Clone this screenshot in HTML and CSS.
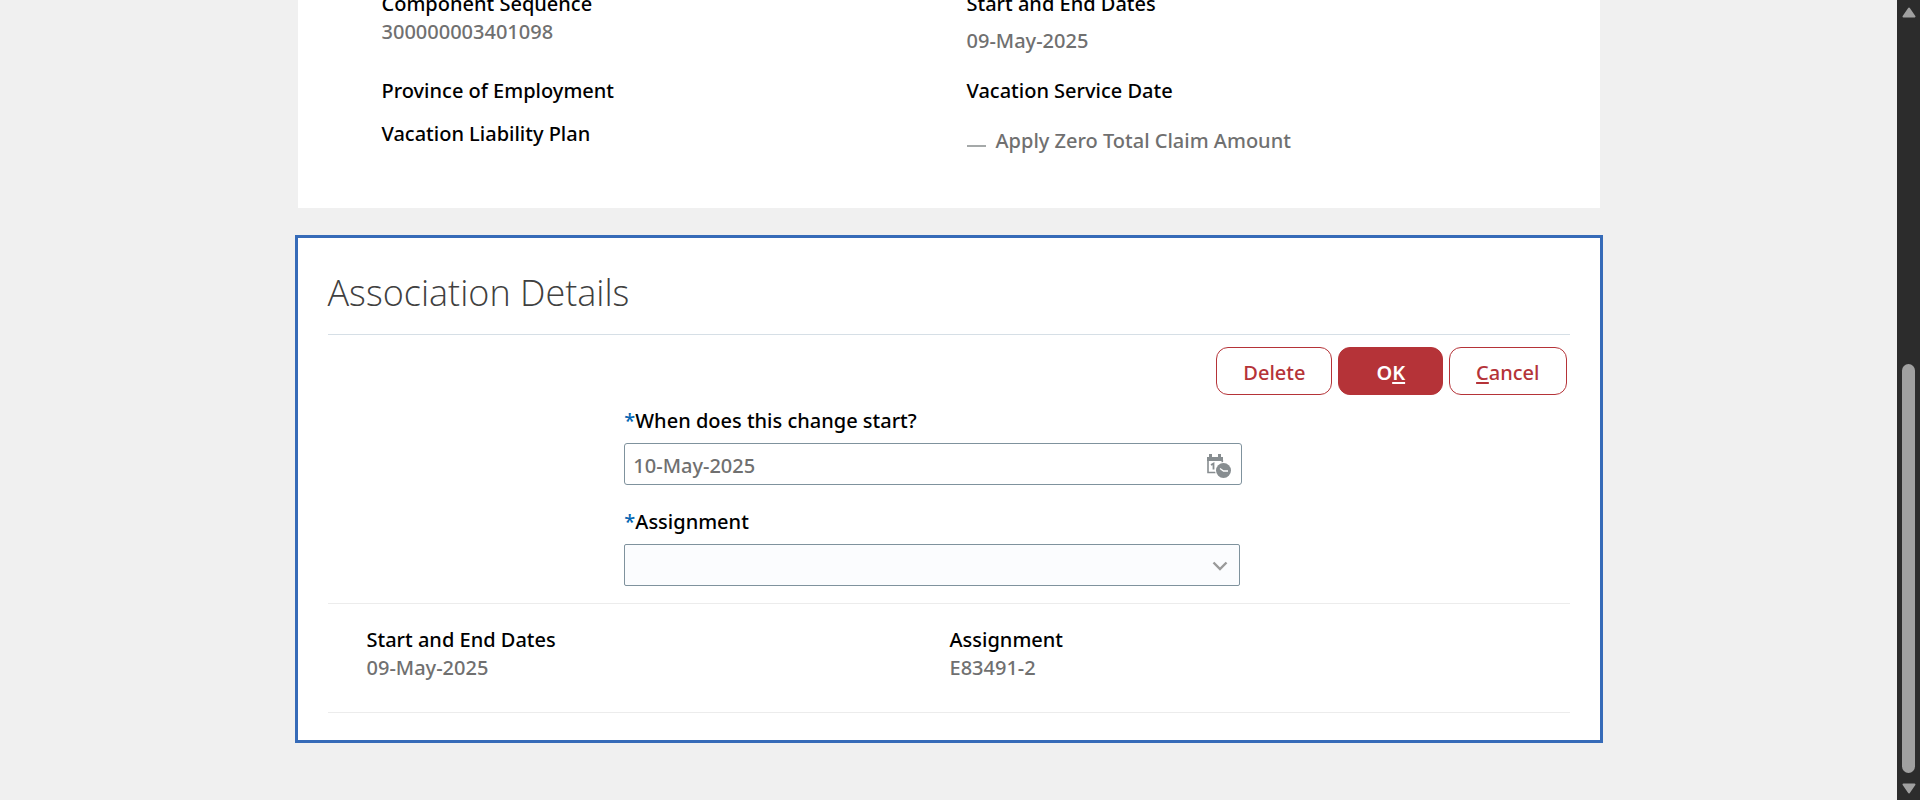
FILE: index.html
```html
<!DOCTYPE html>
<html lang="en">
<head>
<meta charset="utf-8">
<title>Association Details</title>
<link rel="stylesheet" href="styles.css">
</head>
<body>
<div class="app">
  <main class="content">
    <section class="card card-summary">
      <div class="summary-column">
        <div class="field">
          <span class="label">Component Sequence</span>
          <span class="value">300000003401098</span>
        </div>
        <span class="label label-province">Province of Employment</span>
        <span class="label label-plan">Vacation Liability Plan</span>
      </div>
      <div class="summary-column">
        <span class="label">Start and End Dates</span>
        <span class="value value-dates">09-May-2025</span>
        <span class="label label-service">Vacation Service Date</span>
        <span class="flag"><span class="dash"></span><span class="value">Apply Zero Total Claim Amount</span></span>
      </div>
    </section>

    <section class="card card-active">
      <h2 class="heading">Association Details</h2>
      <div class="actions">
        <button class="button" type="button">Delete</button>
        <button class="button button-primary" type="button" accesskey="k">O<span class="key">K</span></button>
        <button class="button" type="button" accesskey="c"><span class="key">C</span>ancel</button>
      </div>
      <form class="form">
        <div class="form-row">
          <label class="label" for="start-date"><span class="required">*</span>When does this change start?</label>
          <div class="control">
            <input class="input" id="start-date" type="text" value="10-May-2025" required>
            <svg class="icon-date" viewBox="0 0 24 24" width="24" height="24" aria-hidden="true">
              <path d="M0 3h2V0h3v3h6V0h3v3h2v4H0z" fill="#878d90"/>
              <path d="M1 6v12.500h9M15.300 6v4" fill="none" stroke="#878d90" stroke-width="1.600"/>
              <path d="M4 11l2.500-1.500v6" fill="none" stroke="#878d90" stroke-width="1.800"/>
              <circle cx="16.500" cy="16.500" r="8.500" fill="#fff"/>
              <circle cx="16.500" cy="16.500" r="7.500" fill="#878d90"/>
              <path d="M13 14.500l3.500 2.500h4.500" fill="none" stroke="#fff" stroke-width="1.300"/>
            </svg>
          </div>
        </div>
        <div class="form-row">
          <label class="label" for="assignment"><span class="required">*</span>Assignment</label>
          <div class="control control-select">
            <select class="input input-select" id="assignment" required><option value=""></option></select>
            <svg class="icon-chevron" viewBox="0 0 16 10" width="16" height="10" aria-hidden="true">
              <path d="M1.500 1.500L8 8l6.500-6.500" fill="none" stroke="#9a9a9a" stroke-width="2.400"/>
            </svg>
          </div>
        </div>
      </form>
      <div class="details">
        <div class="field">
          <span class="label">Start and End Dates</span>
          <span class="value">09-May-2025</span>
        </div>
        <div class="field">
          <span class="label">Assignment</span>
          <span class="value">E83491-2</span>
        </div>
      </div>
    </section>
  </main>

  <div class="scrollbar" aria-hidden="true">
    <svg class="arrow" viewBox="0 0 14 11" width="14" height="11"><path d="M7 1.500L12.500 9.500h-11z" fill="#a0a0a0" stroke="#a0a0a0" stroke-width="2" stroke-linejoin="round"/></svg>
    <div class="thumb"></div>
    <svg class="arrow" viewBox="0 0 14 11" width="14" height="11"><path d="M7 9.500L12.500 1.500h-11z" fill="#a0a0a0" stroke="#a0a0a0" stroke-width="2" stroke-linejoin="round"/></svg>
  </div>
</div>
</body>
</html>
```
FILE: styles.css
```css
* {
  box-sizing: border-box;
}

body {
  margin: 0;
  background: #f0f0f0;
  color: #000;
  font: 500 20px/28px "Noto Sans", "Open Sans", sans-serif;
}

.app {
  display: flex;
  height: 100vh;
  overflow: hidden;
}

.content {
  flex: 1;
  min-width: 0;
  padding: 0 24px;
}

.card {
  max-width: 1302px;
  margin: 0 auto;
  background: #fff;
}

/* The page is scrolled down, so the first card runs off the top. */
.card-summary {
  display: grid;
  grid-template-columns: 1fr 1fr;
  margin-top: -40px;
  padding: 30px 48px 53px 84px;
}

.summary-column,
.field {
  display: flex;
  flex-direction: column;
}

.label-province {
  margin-top: 31px;
}

.label-plan {
  margin-top: 15px;
}

.label-service {
  margin-top: 22px;
}

.value {
  color: #707070;
}

.value-dates {
  margin-top: 9px;
}

.flag {
  display: flex;
  align-items: center;
  gap: 10px;
  margin-top: 22px;
}

.dash {
  width: 19px;
  height: 2px;
  margin-top: 10px;
  background: #a5a9a9;
}

.card-active {
  max-width: 1308px;
  margin-top: 27px;
  padding: 27px 30px;
  border: 3px solid #366bb8;
}

.heading {
  margin: 0;
  padding-bottom: 13px;
  border-bottom: 1px solid #d6dfe6;
  color: #404040;
  font-family: "Open Sans", "Noto Sans", sans-serif;
  font-size: 36px;
  font-weight: 300;
  line-height: 56px;
}

.actions {
  display: flex;
  justify-content: flex-end;
  gap: 6px;
  padding: 12px 3px;
}

.button {
  height: 48px;
  padding: 3px 26px 0;
  border: 1px solid #b53338;
  border-radius: 12px;
  background: #fff;
  color: #b53338;
  font: inherit;
}

.button-primary {
  padding: 3px 37px 0;
  background: #b53338;
  color: #fff;
  font-weight: 600;
}

.key {
  text-decoration: underline;
  text-decoration-thickness: 2px;
  text-underline-offset: 2px;
}

.form {
  display: flex;
  flex-direction: column;
  gap: 23px;
  padding: 0 26.4% 17px 23.9%;
  border-bottom: 1px solid #ececec;
}

.form-row {
  display: flex;
  flex-direction: column;
  gap: 8px;
}

.required {
  color: #0566b3;
}

.control {
  position: relative;
}

.control-select {
  margin-right: 2px;
}

.input {
  display: block;
  width: 100%;
  height: 42px;
  padding: 2px 48px 0 8px;
  border: 1px solid #7f929d;
  border-radius: 3px;
  background: #fff;
  color: #707070;
  font: inherit;
}

.input-select {
  appearance: none;
  border-radius: 2px;
  background: #fbfcfe;
}

.icon-date {
  position: absolute;
  top: 11px;
  right: 11px;
}

.icon-chevron {
  position: absolute;
  top: 17px;
  right: 12px;
}

.details {
  display: grid;
  grid-template-columns: 1fr 1fr;
  padding: 22px 37px 30px 39px;
  border-bottom: 1px solid #ececec;
}

.scrollbar {
  display: grid;
  grid-template-rows: 24px 1fr 24px;
  justify-items: center;
  align-items: center;
  width: 23px;
  background: #2c2c2c;
}

.thumb {
  align-self: end;
  width: 13px;
  height: 54.4%;
  margin-bottom: 3px;
  border-radius: 7px;
  background: #a0a0a0;
}
```
